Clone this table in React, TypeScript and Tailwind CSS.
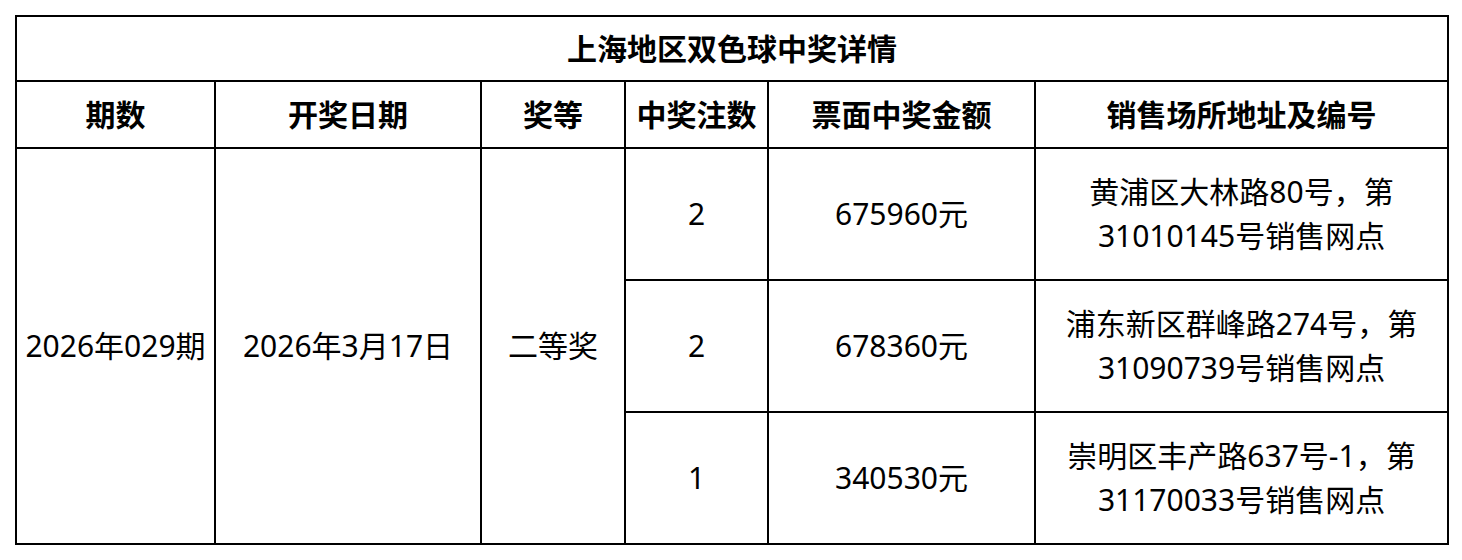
import React from "react";

const rows = [
  { count: "2", amount: "675960元", addr: ["黄浦区大林路80号，第", "31010145号销售网点"] },
  { count: "2", amount: "678360元", addr: ["浦东新区群峰路274号，第", "31090739号销售网点"] },
  { count: "1", amount: "340530元", addr: ["崇明区丰产路637号-1，第", "31170033号销售网点"] },
];

const cell = "border-2 border-black text-center align-middle p-0";

export default function App() {
  return (
    <div
      className="min-h-[560px] bg-white pt-[15px] px-[15px] text-black"
      style={{ fontFamily: '"Noto Sans", "Noto Sans CJK SC", sans-serif' }}
    >
      <table className="w-[1432px] table-fixed border-collapse text-[30px] leading-[44px]">
        <colgroup>
          <col className="w-[199px]" />
          <col className="w-[266px]" />
          <col className="w-[144px]" />
          <col className="w-[143px]" />
          <col className="w-[267px]" />
          <col className="w-[413px]" />
        </colgroup>
        <tbody>
          <tr className="h-[65px]">
            <td colSpan={6} className={`${cell} font-bold`}>
              上海地区双色球中奖详情
            </td>
          </tr>
          <tr className="h-[67px] font-bold">
            <td className={cell}>期数</td>
            <td className={cell}>开奖日期</td>
            <td className={cell}>奖等</td>
            <td className={cell}>中奖注数</td>
            <td className={cell}>票面中奖金额</td>
            <td className={cell}>销售场所地址及编号</td>
          </tr>
          {rows.map((r, i) => (
            <tr key={i} className="h-[132px]">
              {i === 0 ? (
                <>
                  <td rowSpan={3} className={cell}>2026年029期</td>
                  <td rowSpan={3} className={cell}>2026年3月17日</td>
                  <td rowSpan={3} className={cell}>二等奖</td>
                </>
              ) : null}
              <td className={cell}>{r.count}</td>
              <td className={cell}>{r.amount}</td>
              <td className={cell}>
                <div>{r.addr[0]}</div>
                <div>{r.addr[1]}</div>
              </td>
            </tr>
          ))}
        </tbody>
      </table>
    </div>
  );
}
